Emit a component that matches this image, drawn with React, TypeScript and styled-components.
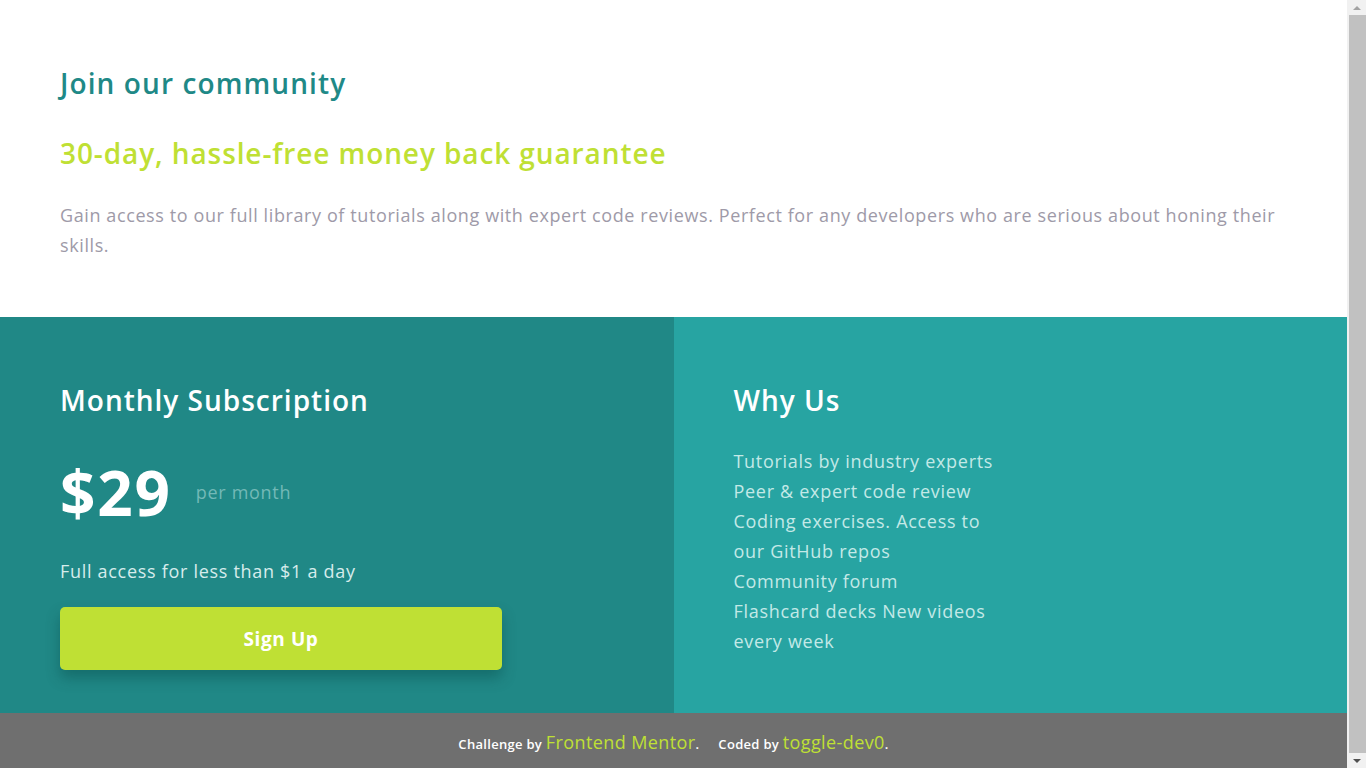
import React from "react";
import styled, { createGlobalStyle } from "styled-components";

const GlobalStyle = createGlobalStyle`
  html, body { margin: 0; padding: 0; }
  body {
    font-family: "Open Sans", "Noto Sans", sans-serif;
    letter-spacing: 0.7px;
    background: #ffffff;
  }
  * { box-sizing: border-box; }
`;

const Page = styled.div`
  display: flex;
  flex-direction: column;
  margin-right: 19px;
`;

const Intro = styled.section`
  padding: 66px 60px 57px;
  background: #ffffff;
`;

const Title = styled.h1`
  margin: 0;
  font-size: 28px;
  line-height: 34px;
  font-weight: 600;
  letter-spacing: 1.1px;
  color: #1f8987;
`;

const Guarantee = styled.h2`
  margin: 36px 0 0;
  font-size: 28px;
  line-height: 34px;
  font-weight: 600;
  letter-spacing: 0.9px;
  color: #bfe034;
`;

const Lead = styled.p`
  margin: 30px 0 0;
  font-size: 18px;
  line-height: 30px;
  letter-spacing: 0.6px;
  color: #9e9aa8;
`;

const Panels = styled.div`
  display: grid;
  grid-template-columns: 1fr 1fr;
`;

const Panel = styled.section<{ $tone: "dark" | "light" }>`
  background: ${(p) => (p.$tone === "dark" ? "#208886" : "#27a4a2")};
  padding: 66px 60px 43px;
  display: flex;
  flex-direction: column;
`;

const PanelTitle = styled.h3`
  margin: 0;
  font-size: 28px;
  line-height: 34px;
  font-weight: 600;
  letter-spacing: 1px;
  color: #ffffff;
`;

const PriceRow = styled.div`
  margin-top: 45px;
  display: flex;
  align-items: center;
  gap: 24px;
`;

const Price = styled.span`
  font-size: 62px;
  line-height: 60px;
  font-weight: 700;
  letter-spacing: 1.8px;
  color: #ffffff;
`;

const Per = styled.span`
  font-size: 18px;
  line-height: 30px;
  color: #73b9b7;
`;

const Note = styled.p`
  margin: 34px 0 0;
  font-size: 18px;
  line-height: 30px;
  color: #d6ecec;
`;

const SignUp = styled.button`
  margin-top: 21px;
  width: 442px;
  height: 63px;
  border: none;
  border-radius: 5px;
  background: #bfe034;
  color: #ffffff;
  font-family: inherit;
  font-size: 19px;
  font-weight: 700;
  letter-spacing: 0.6px;
  box-shadow: 0 8px 14px rgba(0, 60, 60, 0.35);
  cursor: pointer;
`;

const Features = styled.ul`
  list-style: none;
  margin: 29px 0 0;
  padding: 0;
`;

const Feature = styled.li`
  font-size: 18px;
  line-height: 30px;
  color: #c3e9e7;
`;

const Footer = styled.footer`
  background: #6f6f6f;
  height: 62px;
  display: flex;
  align-items: center;
  justify-content: center;
  gap: 19px;
  padding-bottom: 5px;
`;

const Credit = styled.span`
  font-size: 13px;
  font-weight: 600;
  letter-spacing: 0.3px;
  color: #ffffff;
`;

const CreditLink = styled.a`
  font-size: 18px;
  font-weight: 400;
  letter-spacing: 0.4px;
  color: #bfe034;
  text-decoration: none;
`;

/* decorative browser scrollbar seen at the right edge of the reference */
const ScrollRail = styled.div`
  position: fixed;
  top: 0;
  right: 0;
  bottom: 0;
  width: 19px;
  background: #f1f1f1;
  display: flex;
  flex-direction: column;
  align-items: center;
`;

const ScrollArrow = styled.div<{ $dir: "up" | "down" }>`
  height: 15px;
  width: 100%;
  display: flex;
  align-items: center;
  justify-content: center;
  &::before {
    content: "";
    width: 0;
    height: 0;
    border-left: 4px solid transparent;
    border-right: 4px solid transparent;
    ${(p) =>
      p.$dir === "up"
        ? "border-bottom: 4px solid #a3a3a3;"
        : "border-top: 4px solid #505050;"}
  }
`;

const ScrollThumb = styled.div`
  flex: 1;
  width: 17px;
  margin-left: 2px;
  background: #c1c1c1;
`;

const features = [
  "Tutorials by industry experts",
  "Peer & expert code review",
  "Coding exercises. Access to",
  "our GitHub repos",
  "Community forum",
  "Flashcard decks New videos",
  "every week",
];

export default function App() {
  return (
    <>
      <GlobalStyle />
      <Page>
        <Intro>
          <Title>Join our community</Title>
          <Guarantee>30-day, hassle-free money back guarantee</Guarantee>
          <Lead>
            Gain access to our full library of tutorials along with expert code
            reviews. Perfect for any developers who are serious about honing
            their skills.
          </Lead>
        </Intro>
        <Panels>
          <Panel $tone="dark">
            <PanelTitle>Monthly Subscription</PanelTitle>
            <PriceRow>
              <Price>$29</Price>
              <Per>per month</Per>
            </PriceRow>
            <Note>Full access for less than $1 a day</Note>
            <SignUp>Sign Up</SignUp>
          </Panel>
          <Panel $tone="light">
            <PanelTitle>Why Us</PanelTitle>
            <Features>
              {features.map((f) => (
                <Feature key={f}>{f}</Feature>
              ))}
            </Features>
          </Panel>
        </Panels>
        <Footer>
          <Credit>
            Challenge by <CreditLink href="#">Frontend Mentor</CreditLink>.
          </Credit>
          <Credit>
            Coded by <CreditLink href="#">toggle-dev0</CreditLink>.
          </Credit>
        </Footer>
      </Page>
      <ScrollRail aria-hidden="true">
        <ScrollArrow $dir="up" />
        <ScrollThumb />
        <ScrollArrow $dir="down" />
      </ScrollRail>
    </>
  );
}
